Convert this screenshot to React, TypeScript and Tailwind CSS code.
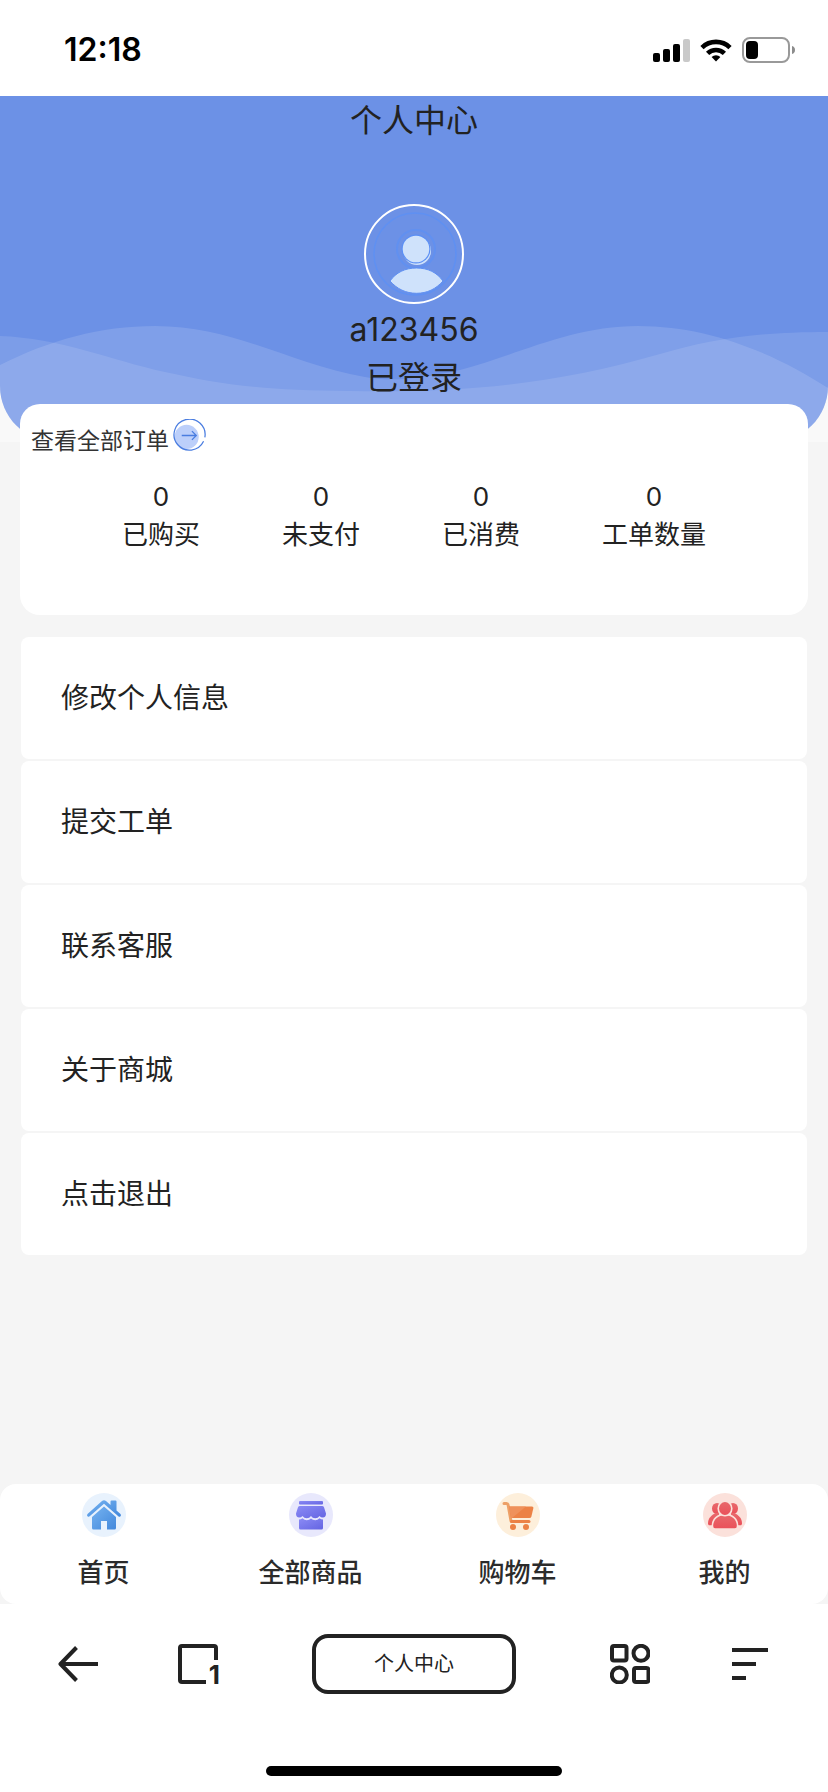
import type { ReactNode } from "react";

const stats = [
  { label: "已购买", value: 0 },
  { label: "未支付", value: 0 },
  { label: "已消费", value: 0 },
  { label: "工单数量", value: 0 },
];

const menu = ["修改个人信息", "提交工单", "联系客服", "关于商城", "点击退出"];

function StatusBar() {
  return (
    <div className="flex h-24 items-center justify-between bg-white pt-[3px] pr-8 pl-16 text-black">
      <span className="text-[32px] leading-10 font-semibold">12:18</span>
      <div className="flex items-center gap-[10px]">
        <svg width="37" height="24" viewBox="0 0 37 24" aria-hidden="true">
          <rect x="0" y="15" width="7" height="9" rx="2" />
          <rect x="10" y="11" width="7" height="13" rx="2" />
          <rect x="20" y="6" width="7" height="18" rx="2" />
          <rect x="30" y="1" width="7" height="23" rx="2" fill="#c9c9c9" />
        </svg>
        <svg width="32" height="24" viewBox="0 0 32 24" aria-hidden="true">
          <g fill="none" stroke="#000" strokeWidth="4.6">
            <path d="M2 9.6a20 20 0 0 1 28 0" />
            <path d="M7.6 15.4a12 12 0 0 1 16.8 0" />
          </g>
          <path d="M16 23.6l-4.4-4.5a6.3 6.3 0 0 1 8.8 0z" />
        </svg>
        <svg width="54" height="26" viewBox="0 0 54 26" aria-hidden="true">
          <rect x="1" y="1" width="46" height="24" rx="7" fill="none" stroke="#999" strokeWidth="2" />
          <rect x="4" y="4" width="12" height="18" rx="4" />
          <path d="M50 9c2 .6 3 2 3 4s-1 3.400-3 4z" fill="#8c8c8c" />
        </svg>
      </div>
    </div>
  );
}

function Avatar() {
  return (
    <svg width="100" height="100" viewBox="0 0 100 100" role="img" aria-label="头像">
      <circle cx="50" cy="50" r="49" fill="none" stroke="#fff" strokeWidth="2" />
      <circle cx="51" cy="50" r="41" fill="none" stroke="#5f90f2" strokeWidth="1.500" />
      <circle cx="52" cy="45" r="19" fill="none" stroke="#6190f0" strokeWidth="2" />
      <circle cx="53" cy="47" r="14" fill="#cfe2fb" />
      <circle cx="52" cy="45" r="14.500" fill="#5b8ff5" />
      <circle cx="52" cy="45" r="13.300" fill="#cfe2fb" />
      <path
        d="M26 77c6-8.500 15-13 26.500-13s20.500 4.500 26.500 13c-7 8-16 12.300-26.500 12.300S33 85 26 77z"
        fill="#cfe2fb"
        stroke="#5f90f2"
        strokeWidth="1"
      />
    </svg>
  );
}

function Header() {
  return (
    <header className="bg-[#f9f9f9]">
      <div className="relative flex flex-col items-center overflow-hidden rounded-b-[56px] bg-[#6c91e6] pb-10">
        <svg
          className="absolute inset-x-0 bottom-0 h-[120px] w-full"
          viewBox="0 0 828 120"
          preserveAspectRatio="none"
          fill="#fff"
          fillOpacity="0.130"
          aria-hidden="true"
        >
          <path d="M0 43C50 18 100 4 155 4C235 4 290 42 365 55Q400 62 460 48C515 34 570 4 638 4C710 4 775 32 828 66V120H0z" />
          <path
            d="M0 14C60 16 110 38 165 50C215 61 260 69 350 69C470 71 560 61 660 32C710 18 750 10 828 10V120H0z"
            fillOpacity="0.110"
          />
        </svg>
        <h1 className="relative mt-1 text-[32px] leading-[42px]">个人中心</h1>
        <div className="relative mt-[62px]">
          <Avatar />
        </div>
        <div className="relative mt-[2px] text-center text-[32px] leading-[48px]">
          <p>a123456</p>
          <p>已登录</p>
        </div>
      </div>
    </header>
  );
}

function OrderCard() {
  return (
    <section className="relative mx-5 -mt-[38px] rounded-[20px] bg-white px-[11px] pt-3 pb-[61px]">
      <a href="#orders" className="flex items-center gap-1 text-[23px] leading-[50px] text-[#333]">
        查看全部订单
        <svg className="mb-3" width="33" height="33" viewBox="0 0 34 34" aria-hidden="true">
          <circle cx="14" cy="18.500" r="12.500" fill="#bccffa" />
          <path d="M31.500 23A16 16 0 1 1 32.800 19" fill="none" stroke="#4a7de0" strokeWidth="1.300" />
          <path d="M9 17h15M19.500 12.500l4.500 4.500-4.500 4.500" fill="none" stroke="#4a7de0" strokeWidth="1.300" />
        </svg>
      </a>
      <dl className="mt-3 flex justify-between px-[91px] text-center text-[26px] leading-[38px]">
        {stats.map((s) => (
          <div key={s.label} className="flex flex-col-reverse">
            <dt>{s.label}</dt>
            <dd>{s.value}</dd>
          </div>
        ))}
      </dl>
    </section>
  );
}

function HomeIcon() {
  return (
    <svg width="44" height="44" viewBox="0 0 44 44" aria-hidden="true">
      <defs>
        <linearGradient id="home" x1="0" y1="0" x2="1" y2="1">
          <stop offset="0" stopColor="#76b3f0" />
          <stop offset="1" stopColor="#4288dc" />
        </linearGradient>
      </defs>
      <circle cx="22" cy="22" r="22" fill="#e8f2fd" />
      <g fill="url(#home)">
        <path d="M5.500 21L20 8q2-1.700 4 0l4.500 4V8.500q0-1 1-1h4q1 0 1 1v9l4 3.500q1 1.200 0 2.200t-2.200 0L22 10.800 7.700 23.300q-1.200.9-2.200-.1t0-2.200z" />
        <path d="M22 13.500L34 24v11q0 1.500-1.500 1.500H25v-8.500h-6v8.500h-7.500Q10 36.500 10 35V24z" />
      </g>
    </svg>
  );
}

function ShopIcon() {
  return (
    <svg width="44" height="44" viewBox="0 0 44 44" aria-hidden="true">
      <defs>
        <linearGradient id="shop" x1="0" y1="0" x2="1" y2="1">
          <stop offset="0" stopColor="#8b8bf5" />
          <stop offset="1" stopColor="#6464e2" />
        </linearGradient>
      </defs>
      <circle cx="22" cy="22" r="22" fill="#e8e8fc" />
      <g fill="url(#shop)">
        <rect x="10" y="8" width="24" height="3.500" rx="1" />
        <path d="M11 13h22q1.500 0 2 1.300l2 6.200q0 4-3.200 4-2 0-3.300-1.500-1.500 2.200-4.300 2.200T22 23q-1.500 2.200-4.200 2.200T13.500 23q-1.300 1.500-3.300 1.500-3.200 0-3.200-4l2-6.200Q9.500 13 11 13z" />
        <path d="M10 26.500q2 0 3.500-1.300 1.800 2 4.300 2t4.200-1.800q1.700 1.800 4.200 1.800t4.300-2q1.500 1.300 3.500 1.300V35q0 1.500-1.500 1.500h-21Q10 36.500 10 35z" />
      </g>
    </svg>
  );
}

function CartIcon() {
  return (
    <svg width="44" height="44" viewBox="0 0 44 44" aria-hidden="true">
      <circle cx="22" cy="22" r="22" fill="#fdefdb" />
      <path d="M8 10.500h2.500q1.300 0 1.600 1.500L15 28" fill="none" stroke="#eda066" strokeWidth="3" strokeLinecap="round" />
      <path d="M13 13.500h23q1.700 0 1.400 1.500l-2 8.500q-.4 1.500-2 1.500H15z" fill="#ec8246" />
      <path d="M13 13.500h17L16 25h-1z" fill="#ef915b" />
      <path d="M15.500 28.500H33" stroke="#ec8246" strokeWidth="3" strokeLinecap="round" />
      <circle cx="17" cy="34" r="3" fill="#ec8246" />
      <circle cx="30" cy="34" r="3" fill="#ec8246" />
    </svg>
  );
}

function PeopleIcon() {
  return (
    <svg width="44" height="44" viewBox="0 0 44 44" aria-hidden="true">
      <defs>
        <linearGradient id="people" x1="0" y1="0" x2="0" y2="1">
          <stop offset="0" stopColor="#e8696c" />
          <stop offset="1" stopColor="#ea5059" />
        </linearGradient>
      </defs>
      <circle cx="22" cy="22" r="22" fill="#fbe1db" />
      <g fill="url(#people)">
        <ellipse cx="14" cy="15.500" rx="5" ry="5.500" />
        <ellipse cx="30" cy="15.500" rx="5" ry="5.500" />
        <path d="M13 20c-5 2-8 5.500-8 10.500 0 1.300.5 1.700 1.700 1.700H16V20z" />
        <path d="M31 20c5 2 8 5.500 8 10.500 0 1.300-.5 1.700-1.700 1.700H28V20z" />
      </g>
      <g fill="url(#people)" stroke="#fbe1db" strokeWidth="1.600">
        <path d="M22 21.500c-7.500 0-12.600 4.500-12.600 11.500 0 2.300.8 3 2.600 3h20c1.800 0 2.600-.7 2.600-3 0-7-5.100-11.500-12.600-11.500z" />
        <ellipse cx="22" cy="15.500" rx="6.800" ry="7.300" />
      </g>
    </svg>
  );
}

const tabs: { label: string; href: string; icon: ReactNode }[] = [
  { label: "首页", href: "#home", icon: <HomeIcon /> },
  { label: "全部商品", href: "#goods", icon: <ShopIcon /> },
  { label: "购物车", href: "#cart", icon: <CartIcon /> },
  { label: "我的", href: "#me", icon: <PeopleIcon /> },
];

function TabBar() {
  return (
    <nav className="grid h-[120px] grid-cols-4 rounded-2xl bg-white">
      {tabs.map((tab) => (
        <a
          key={tab.label}
          href={tab.href}
          className="flex flex-col items-center gap-4 pt-[9px] text-[26px] leading-10 font-medium text-[#2b2b2b]"
        >
          {tab.icon}
          {tab.label}
        </a>
      ))}
    </nav>
  );
}

function BrowserBar() {
  return (
    <div className="flex flex-col items-center bg-white pt-[30px] pb-4 text-[#222]">
      <div className="flex w-full items-center justify-between px-[58px]">
        <div className="flex items-center gap-20">
          <button type="button" aria-label="返回">
            <svg width="40" height="40" viewBox="0 0 40 40" fill="none" stroke="currentColor" strokeWidth="4">
              <path d="M40 20H3M18.500 3.500L2.500 20l16 16.500" strokeLinejoin="round" />
            </svg>
          </button>
          <button type="button" aria-label="标签页">
            <svg className="overflow-visible" width="40" height="40" viewBox="0 0 40 40" aria-hidden="true">
              <path
                d="M28 38H4q-2 0-2-2V4q0-2 2-2h32q2 0 2 2v12"
                fill="none"
                stroke="currentColor"
                strokeWidth="4"
              />
              <text x="42" y="40" textAnchor="end" fontSize="26" fontWeight="700" fill="currentColor">
                1
              </text>
            </svg>
          </button>
        </div>
        <button
          type="button"
          className="h-[60px] w-[204px] rounded-2xl border-4 border-[#222] text-xl"
        >
          个人中心
        </button>
        <div className="flex items-center gap-20">
          <button type="button" aria-label="应用">
            <svg width="40" height="40" viewBox="0 0 40 40" fill="none" stroke="currentColor" strokeWidth="4">
              <rect x="2" y="2" width="14.500" height="14.500" rx="2" />
              <circle cx="31" cy="9.300" r="7.500" />
              <circle cx="9.300" cy="31" r="7.500" />
              <rect x="24" y="24" width="14.500" height="14" rx="2" />
            </svg>
          </button>
          <button type="button" aria-label="菜单">
            <svg width="40" height="40" viewBox="0 0 40 40" stroke="currentColor" strokeWidth="4">
              <path d="M2 6h36M2 20h24M2 34h14" />
            </svg>
          </button>
        </div>
      </div>
      <div className="mt-[72px] h-[10px] w-[296px] rounded-full bg-black" />
    </div>
  );
}

export default function App() {
  return (
    <div className="flex min-h-screen flex-col bg-[#f5f5f5] font-['Inter','Noto_Sans_CJK_SC',sans-serif] text-[#222]">
      <StatusBar />
      <Header />
      <main className="grow pb-10">
        <OrderCard />
        <ul className="mx-[21px] mt-[22px] flex flex-col gap-[2px]">
          {menu.map((item) => (
            <li key={item}>
              <button
                type="button"
                className="h-[122px] w-full rounded-lg bg-white px-10 text-left text-[28px] leading-10"
              >
                {item}
              </button>
            </li>
          ))}
        </ul>
      </main>
      <TabBar />
      <BrowserBar />
    </div>
  );
}
